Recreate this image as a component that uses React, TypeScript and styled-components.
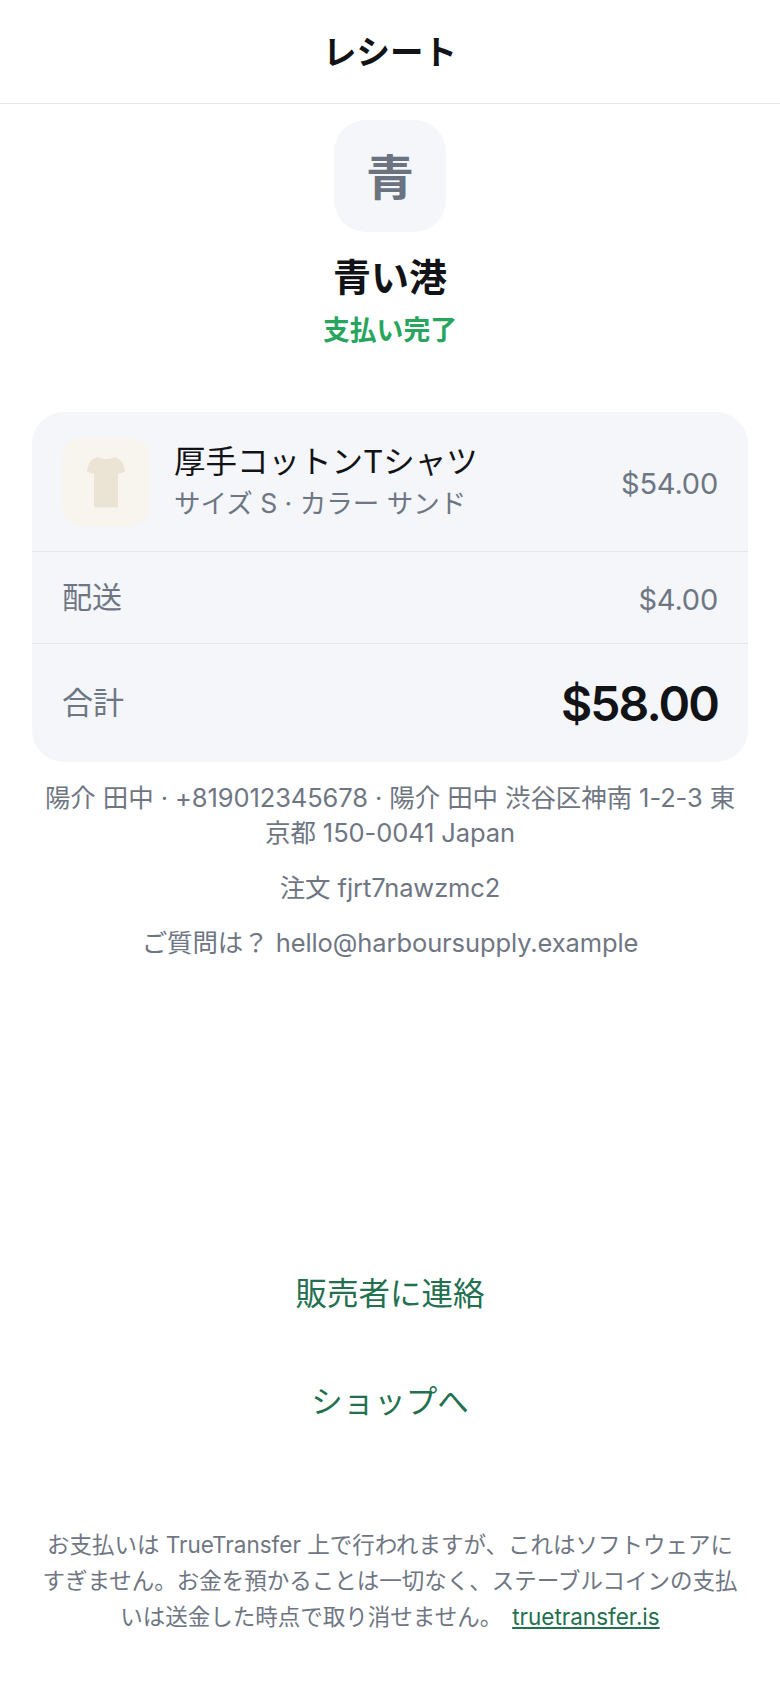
import React from "react";
import styled, { createGlobalStyle } from "styled-components";

const GlobalStyle = createGlobalStyle`
	* {
		box-sizing: border-box;
	}
	html,
	body {
		margin: 0;
		background: #ffffff;
		font-family: Inter, "Noto Sans CJK JP", sans-serif;
	}
`;

const Page = styled.div`
	width: 780px;
	height: 1688px;
	display: flex;
	flex-direction: column;
	align-items: center;
	background: #ffffff;
	overflow: hidden;
`;

const Header = styled.header`
	width: 100%;
	height: 104px;
	padding-bottom: 4px;
	display: flex;
	justify-content: center;
	align-items: center;
	border-bottom: 1px solid #e6e7e9;
`;

const Title = styled.h1`
	margin: 0;
	font-size: 33.5px;
	font-weight: 600;
	color: #111317;
`;

const Avatar = styled.div`
	width: 112px;
	height: 112px;
	margin-top: 16px;
	padding-bottom: 4px;
	display: flex;
	justify-content: center;
	align-items: center;
	border-radius: 32px;
	background: #f4f6fa;
	color: #6b7280;
	font-size: 48px;
	font-weight: 600;
`;

const Merchant = styled.h2`
	margin: 20px 0 0;
	font-size: 38px;
	line-height: 50px;
	font-weight: 700;
	color: #111317;
`;

const Status = styled.div`
	margin-top: 10px;
	font-size: 26.8px;
	line-height: 36px;
	font-weight: 600;
	color: #27a55d;
`;

const Card = styled.section`
	width: 716px;
	margin-top: 64px;
	border-radius: 32px;
	background: #f4f6fa;
`;

const Row = styled.div<{ $height: number; $divided?: boolean }>`
	height: ${({ $height }) => $height}px;
	padding: 0 30px;
	display: flex;
	align-items: center;
	justify-content: space-between;
	border-bottom: ${({ $divided }) => ($divided ? "1px solid #e4e7ec" : "none")};
`;

const Thumb = styled.div`
	width: 88px;
	height: 88px;
	flex: 0 0 auto;
	display: flex;
	justify-content: center;
	align-items: center;
	border-radius: 20px;
	background: #f8f4ee;
`;

const ItemInfo = styled.div`
	flex: 1;
	margin-left: 24px;
	display: flex;
	flex-direction: column;
`;

const ItemName = styled.div`
	font-size: 31.5px;
	line-height: 42px;
	color: #111317;
`;

const ItemMeta = styled.div`
	font-size: 26.5px;
	line-height: 40px;
	color: #6f7683;
`;

const Amount = styled.div`
	margin-top: 3px;
	font-size: 29px;
	letter-spacing: -0.2px;
	color: #6f7683;
`;

const Label = styled.div<{ $size: number }>`
	padding-bottom: 5px;
	font-size: ${({ $size }) => $size}px;
	color: #6f7683;
`;

const Total = styled.div`
	font-size: 48px;
	font-weight: 600;
	letter-spacing: -1.9px;
	color: #111317;
`;

const Details = styled.div`
	width: 702px;
	margin-top: 18px;
	display: flex;
	flex-direction: column;
	gap: 20px;
	text-align: center;
	font-size: 25.5px;
	letter-spacing: -0.1px;
	line-height: 35px;
	color: #6f7683;
`;

const Detail = styled.p`
	margin: 0;
`;

const Actions = styled.div`
	margin-top: auto;
	display: flex;
	flex-direction: column;
	align-items: center;
	gap: 64px;
`;

const ActionLink = styled.a`
	font-size: 31.5px;
	line-height: 44px;
	color: #23704f;
	text-decoration: none;
`;

const Footer = styled.footer`
	width: 700px;
	margin-top: 103px;
	margin-bottom: 53px;
	text-align: center;
	font-size: 22.5px;
	line-height: 36px;
	color: #6f7683;
`;

const FooterLink = styled.a`
	margin-left: 10px;
	color: #23704f;
	text-decoration: underline;
`;

const ShirtIcon = () => (
	<svg width="40" height="52" viewBox="0 0 40 56" preserveAspectRatio="none" aria-hidden="true">
		<path
			d="M12 1 C15 4 25 4 28 1 L34 4 C37 7 39 13 39 17 L33 19 L32 18 L32 54 C32 55 31 55.5 30 55.5 L10 55.5 C9 55.5 8 55 8 54 L8 18 L7 19 L1 17 C1 13 3 7 6 4 Z"
			fill="#ebe3d4"
		/>
	</svg>
);

const App: React.FC = () => {
	return (
		<Page>
			<GlobalStyle />
			<Header>
				<Title>レシート</Title>
			</Header>
			<Avatar>青</Avatar>
			<Merchant>青い港</Merchant>
			<Status>支払い完了</Status>
			<Card>
				<Row $height={140} $divided>
					<Thumb>
						<ShirtIcon />
					</Thumb>
					<ItemInfo>
						<ItemName>厚手コットンTシャツ</ItemName>
						<ItemMeta>サイズ S · カラー サンド</ItemMeta>
					</ItemInfo>
					<Amount>$54.00</Amount>
				</Row>
				<Row $height={92} $divided>
					<Label $size={30}>配送</Label>
					<Amount>$4.00</Amount>
				</Row>
				<Row $height={118}>
					<Label $size={31}>合計</Label>
					<Total>$58.00</Total>
				</Row>
			</Card>
			<Details>
				<Detail>陽介 田中 · +819012345678 · 陽介 田中 渋谷区神南 1-2-3 東京都 150-0041 Japan</Detail>
				<Detail>注文 fjrt7nawzmc2</Detail>
				<Detail>ご質問は？ hello@harboursupply.example</Detail>
			</Details>
			<Actions>
				<ActionLink>販売者に連絡</ActionLink>
				<ActionLink>ショップへ</ActionLink>
			</Actions>
			<Footer>
				お支払いは TrueTransfer 上で行われますが、これはソフトウェアにすぎません。お金を預かることは一切なく、ステーブルコインの支払いは送金した時点で取り消せません。
				<FooterLink>truetransfer.is</FooterLink>
			</Footer>
		</Page>
	);
};

export default App;
